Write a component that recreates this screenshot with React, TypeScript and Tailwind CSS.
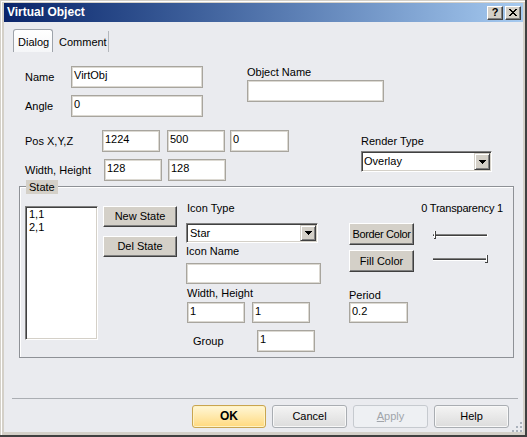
import React from "react";

const TXT = "text-[11px] leading-[13px] text-black";

function Edit({ cls, value }: { cls: string; value?: string }) {
  return (
    <div
      className={`bg-white border border-[#a8a59e] shadow-[inset_1px_1px_0_#dcd9d2,inset_-1px_-1px_0_#dcd9d2] pl-[2px] pt-[2px] whitespace-nowrap ${TXT} ${cls}`}
    >
      {value}
    </div>
  );
}

function Arrow() {
  return (
    <svg width="7" height="4" viewBox="0 0 7 4" shapeRendering="crispEdges">
      <rect x="0" y="0" width="7" height="1" fill="#000" />
      <rect x="1" y="1" width="5" height="1" fill="#000" />
      <rect x="2" y="2" width="3" height="1" fill="#000" />
      <rect x="3" y="3" width="1" height="1" fill="#000" />
    </svg>
  );
}

function Combo({ cls, value, pl }: { cls: string; value: string; pl: string }) {
  return (
    <div
      className={`flex bg-white border border-t-[#808080] border-l-[#808080] border-r-white border-b-white shadow-[inset_1px_1px_0_#404040,inset_-1px_-1px_0_#d4d0c8] p-[1px] ${cls}`}
    >
      <div className={`flex-1 flex items-center ${pl} ${TXT}`}>{value}</div>
      <div className="w-[16px] h-full bg-[#d4d0c8] flex items-center justify-center border border-t-[#d4d0c8] border-l-[#d4d0c8] border-r-[#404040] border-b-[#404040] shadow-[inset_1px_1px_0_#ffffff,inset_-1px_-1px_0_#808080]">
        <Arrow />
      </div>
    </div>
  );
}

function CBtn({ cls, children }: { cls: string; children: React.ReactNode }) {
  return (
    <div
      className={`flex items-center justify-center bg-[#d4d0c8] border border-t-white border-l-white border-r-[#404040] border-b-[#404040] shadow-[inset_-1px_-1px_0_#808080] whitespace-nowrap ${TXT} ${cls}`}
    >
      {children}
    </div>
  );
}

function Slider({ thumbRight }: { thumbRight: boolean }) {
  const tx = thumbRight ? 53 : 1;
  return (
    <svg width="56" height="10" viewBox="0 0 56 10" shapeRendering="crispEdges">
      <rect x="0" y="3" width="55" height="1" fill="#808080" />
      <rect x="0" y="4" width="55" height="1" fill="#404040" />
      <rect x="0" y="5" width="55" height="1" fill="#ffffff" />
      <rect x="54" y="3" width="1" height="3" fill="#ffffff" />
      <rect x={tx} y="0" width="1" height="8" fill="#ffffff" />
      <rect x={tx + 1} y="0" width="1" height="8" fill="#404040" />
      {thumbRight ? (
        <rect x={tx - 1} y="7" width="2" height="1" fill="#404040" />
      ) : (
        <rect x={tx} y="7" width="2" height="1" fill="#404040" />
      )}
    </svg>
  );
}

function Grip() {
  const dots = [
    [8, 0],
    [4, 4],
    [8, 4],
    [0, 8],
    [4, 8],
    [8, 8],
  ];
  return (
    <svg width="10" height="10" viewBox="0 0 10 10" shapeRendering="crispEdges">
      {dots.map(([x, y], i) => (
        <rect key={i} x={x} y={y} width="2" height="2" fill="#aab1bb" />
      ))}
    </svg>
  );
}

export default function App() {
  return (
    <div className="w-[527px] h-[437px] bg-[#d4d0c8] border-r-2 border-b-2 border-r-[#404040] border-b-[#404040] pt-[3px] pl-[4px] pr-[2px] pb-[3px] shadow-[inset_1px_1px_0_#d4d0c8,inset_2px_2px_0_#ffffff] font-['Liberation_Sans',Arial,sans-serif] select-none">
      {/* Title bar */}
      <div className="h-[19px] w-[519px] flex items-center bg-gradient-to-r from-[#0a246a] to-[#a6caf0] pl-[3px] pr-[2px]">
        <span className="text-[12px] leading-[19px] font-bold text-white">Virtual Object</span>
        <div className="ml-auto flex gap-[2px]">
          <div className="w-[16px] h-[14px] bg-[#d4d0c8] border border-t-white border-l-white border-r-[#404040] border-b-[#404040] shadow-[inset_-1px_-1px_0_#808080] flex items-center justify-center text-[11px] leading-[11px] font-bold text-black">
            ?
          </div>
          <div className="w-[16px] h-[14px] bg-[#d4d0c8] border border-t-white border-l-white border-r-[#404040] border-b-[#404040] shadow-[inset_-1px_-1px_0_#808080] flex items-center justify-center">
            <svg width="8" height="7" viewBox="0 0 8 7" shapeRendering="crispEdges">
              <path d="M0 0h2v1h1v1h2V1h1V0h2v1H7v1H6v1H5v1h1v1h1v1h1v1H6V6H5V5H3v1H2v1H0V6h1V5h1V4h1V3H2V2H1V1H0z" fill="#000" />
            </svg>
          </div>
        </div>
      </div>

      {/* Client area */}
      <div className={`relative flex flex-col w-[519px] h-[410px] bg-[#eaebef] ${TXT}`}>
        {/* Tabs */}
        <div className="flex mt-[7px] ml-[9px] h-[23px]">
          <div className="w-[40px] h-[23px] rounded-t-[3px] border border-b-0 border-[#9ea3aa] bg-gradient-to-b from-white to-[#f5f6f8] pl-[4px] pt-[6px]">
            Dialog
          </div>
          <div className="w-[56px] h-[21px] mt-[2px] border-r border-[#b4b7bc] pl-[6px] pt-[5px]">Comment</div>
        </div>

        {/* Row 1 */}
        <div className="flex mt-[14px] ml-[21px]">
          <div className="flex flex-col w-[222px]">
            <div className="flex items-center h-[22px]">
              <span className="w-[46px]">Name</span>
              <Edit cls="w-[132px] h-[22px]" value="VirtObj" />
            </div>
            <div className="flex items-center h-[22px] mt-[7px]">
              <span className="w-[46px]">Angle</span>
              <Edit cls="w-[132px] h-[22px]" value="0" />
            </div>
          </div>
          <div className="flex flex-col">
            <span className="h-[13px]">Object Name</span>
            <Edit cls="mt-[1px] w-[137px] h-[22px]" />
          </div>
        </div>

        {/* Row 2 */}
        <div className="flex mt-[13px] ml-[21px]">
          <div className="flex flex-col w-[336px]">
            <div className="flex items-center h-[22px]">
              <span className="w-[77px]">Pos X,Y,Z</span>
              <Edit cls="w-[58px] h-[22px]" value="1224" />
              <Edit cls="ml-[7px] w-[58px] h-[22px]" value="500" />
              <Edit cls="ml-[5px] w-[59px] h-[22px]" value="0" />
            </div>
            <div className="flex items-center h-[22px] mt-[7px]">
              <span className="w-[79px]">Width, Height</span>
              <Edit cls="w-[58px] h-[22px]" value="128" />
              <Edit cls="ml-[6px] w-[58px] h-[22px]" value="128" />
            </div>
          </div>
          <div className="flex flex-col mt-[5px]">
            <span className="h-[13px]">Render Type</span>
            <Combo cls="mt-[3px] w-[131px] h-[21px]" value="Overlay" pl="pl-[1px]" />
          </div>
        </div>

        {/* State group */}
        <div className="relative mt-[5px] ml-[15px] w-[495px] h-[172px] border border-[#8e9196] shadow-[inset_1px_1px_0_#ffffff] flex pl-[5px] pt-[15px]">
          <span className="absolute left-[6px] top-[-7px] h-[14px] leading-[14px] px-[3px] bg-[#d4d0c8]">State</span>

          {/* Listbox */}
          <div className="mt-[4px] w-[73px] h-[134px] bg-white border border-t-[#808080] border-l-[#808080] border-r-white border-b-white shadow-[inset_1px_1px_0_#404040,inset_-1px_-1px_0_#d4d0c8] pt-[1px] pl-[3px] flex flex-col">
            <span>1,1</span>
            <span>2,1</span>
          </div>

          {/* Buttons */}
          <div className="mt-[4px] ml-[5px] flex flex-col">
            <CBtn cls="w-[74px] h-[21px]">New State</CBtn>
            <CBtn cls="mt-[9px] w-[74px] h-[21px]">Del State</CBtn>
          </div>

          {/* Middle column */}
          <div className="ml-[9px] w-[136px] flex flex-col">
            <span className="h-[13px] pl-[1px]">Icon Type</span>
            <Combo cls="mt-[8px] w-[132px] h-[20px]" value="Star" pl="pl-[2px]" />
            <span className="mt-[2px] h-[13px]">Icon Name</span>
            <Edit cls="mt-[5px] w-[135px] h-[21px]" />
            <span className="mt-[3px] h-[13px] pl-[1px]">Width, Height</span>
            <div className="mt-[2px] flex">
              <Edit cls="ml-[1px] w-[58px] h-[21px]" value="1" />
              <Edit cls="ml-[7px] w-[58px] h-[21px]" value="1" />
            </div>
            <div className="mt-[7px] flex items-center h-[22px]">
              <span className="ml-[7px] w-[64px]">Group</span>
              <Edit cls="w-[58px] h-[22px]" value="1" />
            </div>
          </div>

          {/* Right column */}
          <div className="ml-[27px] w-[154px] flex flex-col">
            <span className="h-[13px] text-right tracking-[-0.2px]">0 Transparency 1</span>
            <div className="mt-[8px] flex items-start">
              <CBtn cls="w-[65px] h-[22px] tracking-[-0.35px]">Border Color</CBtn>
              <div className="ml-[19px] mt-[8px] flex">
                <Slider thumbRight={false} />
              </div>
            </div>
            <div className="mt-[5px] flex items-start">
              <CBtn cls="w-[65px] h-[22px]">Fill Color</CBtn>
              <div className="ml-[19px] mt-[5px] flex">
                <Slider thumbRight={true} />
              </div>
            </div>
            <span className="mt-[17px] h-[13px]">Period</span>
            <Edit cls="w-[59px] h-[21px]" value="0.2" />
          </div>
        </div>

        {/* Separator */}
        <div className="mt-[40px] ml-[8px] w-[506px] h-[1px] bg-[#abaeb3]" />

        {/* Bottom buttons */}
        <div className="mt-[6px] flex justify-end pr-[14px]">
          <div className="w-[74px] h-[23px] rounded-[3px] border border-[#c9a550] bg-gradient-to-b from-[#fff7d6] to-[#ffd97c] shadow-[inset_0_0_0_1px_#fff3c4] flex items-center justify-center text-[12px] font-bold text-black">
            OK
          </div>
          <div className="ml-[6px] w-[75px] h-[23px] rounded-[3px] border border-[#a9adb2] bg-gradient-to-b from-[#f4f4f4] to-[#dcdcdc] shadow-[inset_0_0_0_1px_#f8f8f8] flex items-center justify-center">
            Cancel
          </div>
          <div className="ml-[6px] w-[75px] h-[23px] rounded-[3px] border border-[#c6cacf] bg-[#eef0f3] flex items-center justify-center text-[#a0a4aa]">
            <span>
              <span className="underline">A</span>pply
            </span>
          </div>
          <div className="ml-[6px] w-[75px] h-[23px] rounded-[3px] border border-[#a9adb2] bg-gradient-to-b from-[#f4f4f4] to-[#dcdcdc] shadow-[inset_0_0_0_1px_#f8f8f8] flex items-center justify-center">
            Help
          </div>
        </div>

        {/* Size grip */}
        <div className="absolute right-[1px] bottom-[0px] flex">
          <Grip />
        </div>
      </div>
    </div>
  );
}
